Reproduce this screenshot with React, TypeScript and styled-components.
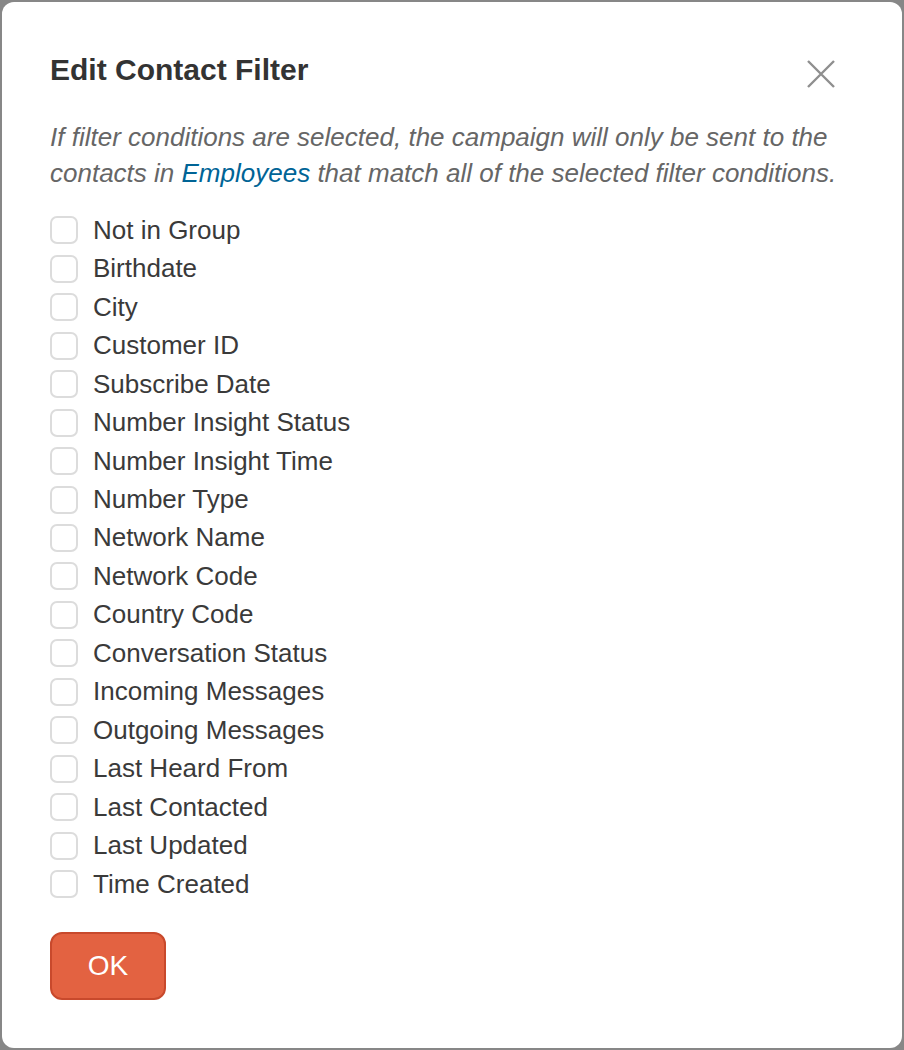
import React from "react";
import styled, { createGlobalStyle } from "styled-components";

const Global = createGlobalStyle`
  html, body { margin: 0; padding: 0; background: #878787; }
  body { font-family: "Liberation Sans", Arial, sans-serif; }
  * { box-sizing: border-box; }
`;

const Dialog = styled.div`
  margin: 2px;
  height: 1046px;
  background: #fff;
  border-radius: 12px;
  padding: 48px 48px 0 48px;
  display: flex;
  flex-direction: column;
`;

const Header = styled.div`
  display: flex;
  justify-content: space-between;
  align-items: flex-start;
`;

const Title = styled.h2`
  margin: 0;
  font-size: 30px;
  font-weight: 700;
  color: #333;
  line-height: 40px;
`;

const CloseButton = styled.button`
  border: none;
  background: transparent;
  padding: 0;
  margin: 10px 19px 0 0;
  width: 28px;
  height: 28px;
  cursor: pointer;
  display: flex;
  align-items: center;
  justify-content: center;
`;

const Description = styled.p`
  margin: 29px 0 20px 0;
  font-size: 26px;
  line-height: 36px;
  font-style: italic;
  color: #666;
`;

const Link = styled.a`
  color: #006496;
  text-decoration: none;
`;

const List = styled.div`
  display: flex;
  flex-direction: column;
`;

const Row = styled.label`
  display: flex;
  align-items: center;
  gap: 15px;
  height: 38.47px;
  font-size: 26px;
  color: #3a3a3a;
  cursor: pointer;
`;

const Box = styled.span`
  width: 28px;
  height: 28px;
  border: 2px solid #dcdcdc;
  border-radius: 7px;
  background: #fff;
  flex-shrink: 0;
`;

const OkButton = styled.button`
  margin-top: 29px;
  align-self: flex-start;
  width: 116px;
  height: 68px;
  background: #e36241;
  border: 2px solid #c8492c;
  border-radius: 12px;
  color: #fff;
  font-family: "Liberation Sans", Arial, sans-serif;
  font-size: 28px;
  cursor: pointer;
`;

const items = [
  "Not in Group",
  "Birthdate",
  "City",
  "Customer ID",
  "Subscribe Date",
  "Number Insight Status",
  "Number Insight Time",
  "Number Type",
  "Network Name",
  "Network Code",
  "Country Code",
  "Conversation Status",
  "Incoming Messages",
  "Outgoing Messages",
  "Last Heard From",
  "Last Contacted",
  "Last Updated",
  "Time Created",
];

export default function App() {
  return (
    <>
      <Global />
      <Dialog>
        <Header>
          <Title>Edit Contact Filter</Title>
          <CloseButton aria-label="Close">
            <svg width="28" height="28" viewBox="0 0 28 28">
              <path d="M1 1 L27 27 M27 1 L1 27" stroke="#8f8f8f" strokeWidth="2.4" fill="none" />
            </svg>
          </CloseButton>
        </Header>
        <Description>
          If filter conditions are selected, the campaign will only be sent to the contacts in{" "}
          <Link href="#">Employees</Link> that match all of the selected filter conditions.
        </Description>
        <List>
          {items.map((t) => (
            <Row key={t}>
              <Box />
              {t}
            </Row>
          ))}
        </List>
        <OkButton>OK</OkButton>
      </Dialog>
    </>
  );
}
